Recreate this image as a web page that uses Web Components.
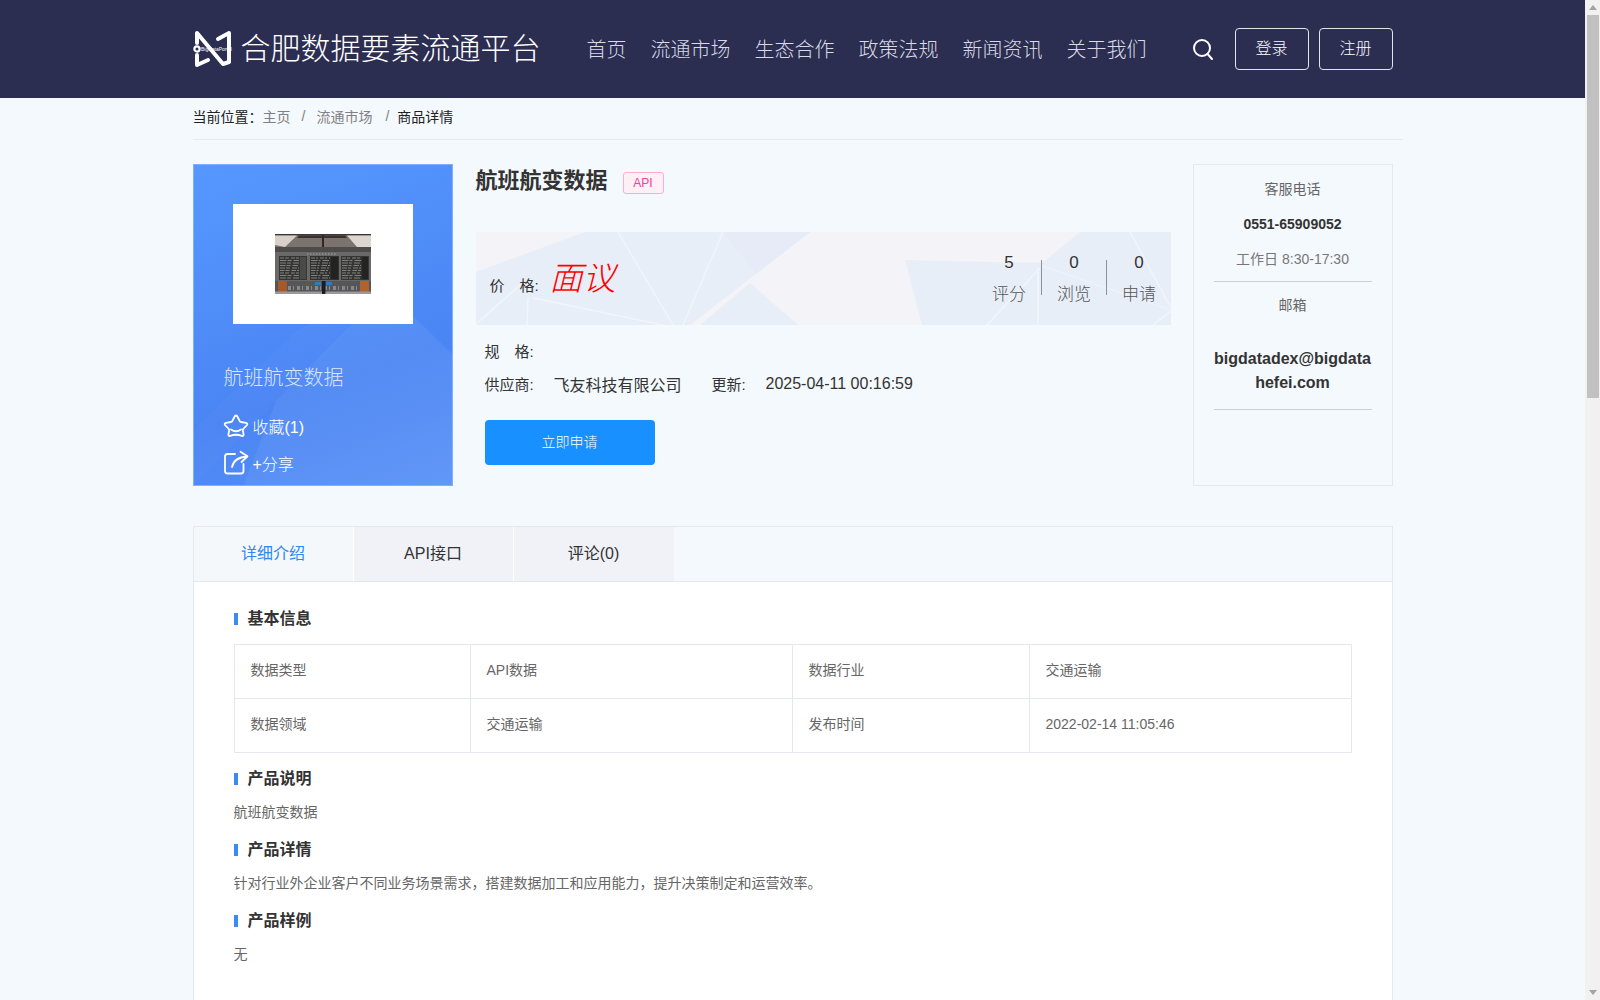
<!DOCTYPE html>
<html lang="zh">
<head>
<meta charset="utf-8">
<title>航班航变数据</title>
<style>
  html, body { margin: 0; height: 100%; overflow: hidden; }
  body {
    display: flex;
    background: #f4f9fd;
    font-family: "Liberation Sans", "Noto Sans CJK SC", sans-serif;
    color: #333;
  }
  main-page { flex: 1; min-width: 0; }
</style>
</head>
<body>
<main-page>
  <site-header></site-header>
  <page-wrap>
    <bread-crumb></bread-crumb>
    <product-summary></product-summary>
    <detail-tabs>
      <section-title>基本信息</section-title>
      <info-table></info-table>
      <section-title>产品说明</section-title>
      <section-text>航班航变数据</section-text>
      <section-title>产品详情</section-title>
      <section-text>针对行业外企业客户不同业务场景需求，搭建数据加工和应用能力，提升决策制定和运营效率。</section-text>
      <section-title>产品样例</section-title>
      <section-text>无</section-text>
    </detail-tabs>
  </page-wrap>
</main-page>
<fake-scrollbar></fake-scrollbar>

<script>
const FONT = '"Liberation Sans", "Noto Sans CJK SC", sans-serif';

class MainPage extends HTMLElement {
  constructor() {
    super();
    this.attachShadow({ mode: 'open' }).innerHTML = `
      <style>
        :host { display: block; height: 1000px; overflow: hidden; }
      </style>
      <slot></slot>`;
  }
}

class SiteHeader extends HTMLElement {
  constructor() {
    super();
    const nav = ['首页', '流通市场', '生态合作', '政策法规', '新闻资讯', '关于我们'];
    this.attachShadow({ mode: 'open' }).innerHTML = `
      <style>
        :host { display: block; height: 98px; background: #2b2d51; }
        .in { width: 1200px; height: 98px; margin: 0 auto; display: flex; align-items: center; }
        .logo { width: 38px; height: 38px; flex: none; margin: 0 9px 0 1px; overflow: visible; }
        h1 { margin: 0; width: 334px; flex: none; font: 300 30px/1 ${FONT}; color: #fff; white-space: nowrap; }
        nav { display: flex; flex: none; padding-bottom: 2px; }
        nav a { padding: 0 12px; font-size: 20px; font-weight: 300; color: #d9dae4; }
        .search { width: 20px; height: 21px; margin-left: 34px; flex: none; }
        .btn { width: 72px; height: 40px; flex: none; line-height: 40px; margin-left: 10px; text-align: center;
               border: 1px solid #e4e5ec; border-radius: 4px; color: #fff; font-size: 16px; font-weight: 300; }
        .search + .btn { margin-left: 22px; }
      </style>
      <div class="in">
        <svg class="logo" viewBox="0 0 38 38" fill="none" stroke="#fff" stroke-width="4" stroke-linejoin="round" stroke-linecap="round">
          <path d="M3 13 V3 L29 34 L35 32 V3 L24 9"/>
          <path d="M3 25 V35 L14 30"/>
          <circle cx="3" cy="19" r="2.6" fill="#2b2d51" stroke-width="2.2"/>
          <text x="7" y="20.5" font-size="5" fill="#fff" stroke="none" font-family="Liberation Sans">BigDataPortal</text>
        </svg>
        <h1>合肥数据要素流通平台</h1>
        <nav>${nav.map(n => `<a>${n}</a>`).join('')}</nav>
        <svg class="search" viewBox="0 0 20 21" fill="none" stroke="#fff" stroke-width="2" stroke-linecap="round">
          <ellipse cx="9" cy="9" rx="8" ry="8"/><path d="M14.6 15 L19 20"/>
        </svg>
        <div class="btn">登录</div>
        <div class="btn">注册</div>
      </div>`;
  }
}

class PageWrap extends HTMLElement {
  constructor() {
    super();
    this.attachShadow({ mode: 'open' }).innerHTML = `
      <style>:host { display: block; width: 1200px; margin: 0 auto; }</style>
      <slot></slot>`;
  }
}

class BreadCrumb extends HTMLElement {
  constructor() {
    super();
    this.attachShadow({ mode: 'open' }).innerHTML = `
      <style>
        :host { display: flex; align-items: center; box-sizing: border-box; width: 1210px; height: 42px; padding-bottom: 5px; border-bottom: 1px solid #e8ecef;
                font-size: 14px; color: #222; white-space: nowrap; }
        .g { color: #808080; }
        .s { color: #808080; margin: 0 11px; }
        .s2 { margin: 0 8px 0 13px; }
      </style>
      <span>当前位置：</span><span class="g">主页</span><span class="s">/</span><span class="g">流通市场</span><span class="s s2">/</span><span>商品详情</span>`;
  }
}

class ProductSummary extends HTMLElement {
  constructor() {
    super();
    this.attachShadow({ mode: 'open' }).innerHTML = `
      <style>
        :host { display: grid; grid-template-columns: 260px 1fr 200px; height: 322px; margin-top: 24px; }
        .mid { padding: 0 0 0 23px; width: 695px; }
        .head { display: flex; align-items: center; height: 32px; padding-top: 1px; }
        .head h2 { margin: 0; font-size: 22px; line-height: 32px; font-weight: 700; color: #333; }
        .tag { margin: 3px 0 0 15px; width: 39px; height: 20px; line-height: 20px; text-align: center; font-size: 12px;
               color: #eb3f9d; background: #fff0f6; border: 1px solid #ffadd2; border-radius: 3px; }
        price-banner { margin-top: 35px; }
        .rows { padding: 0 0 0 9px; font-size: 15px; color: #333; }
        .row { display: flex; align-items: center; height: 33px; }
        .lab { width: 69px; flex: none; white-space: pre; }
        .val { font-size: 16px; }
        .row .up { margin-left: 30px; width: 54px; }
        button { display: block; width: 170px; height: 45px; margin: 20px 0 0 9px; padding: 0 0 4px; border: 0; border-radius: 4px;
                 background: #1890ff; color: #fff; font: 300 14px ${FONT}; }
      </style>
      <product-card></product-card>
      <div class="mid">
        <div class="head"><h2>航班航变数据</h2><span class="tag">API</span></div>
        <price-banner></price-banner>
        <div class="rows" style="margin-top:9px">
          <div class="row"><span class="lab">规　格:</span></div>
          <div class="row"><span class="lab">供应商:</span><span class="val">飞友科技有限公司</span><span class="lab up">更新:</span><span class="val">2025-04-11 00:16:59</span></div>
        </div>
        <button>立即申请</button>
      </div>
      <contact-card></contact-card>`;
  }
}

class ProductCard extends HTMLElement {
  constructor() {
    super();
    // rows of tiny flight-board text for the photo
    let rows = '';
    [[5, 19], [36, 19], [67, 19]].forEach(([x, w]) => {
      for (let y = 24; y < 45; y += 2.5) {
        rows += `<path d="M${x} ${y}h${w}" stroke="#8b8c88" stroke-width=".9" stroke-dasharray="${4 + (y % 3)} 1 ${2 + (x % 3)} 2"/>`;
      }
    });
    this.attachShadow({ mode: 'open' }).innerHTML = `
      <style>
        :host { display: block; position: relative; overflow: hidden; height: 322px; box-sizing: border-box;
                border: 1px solid #7fb0fb; background: linear-gradient(160deg, #5698ff 0%, #4a85f4 65%, #5891f7 100%); color: #fff; }
        .bg { position: absolute; inset: 0; width: 100%; height: 100%; }
        .body { position: relative; padding: 39px 39px 0 30px; }
        .white { width: 180px; height: 120px; margin-left: 9px; background: #fff; display: flex; align-items: center; justify-content: center; }
        .white svg { width: 96px; height: 60px; display: block; }
        h3 { margin: 40px 0 0; font-size: 20px; line-height: 28px; font-weight: 300; color: #d8e6ff; white-space: nowrap; }
        .act { display: flex; align-items: center; height: 37px; font-size: 16px; white-space: nowrap; font-weight: 300; }
        .act svg { width: 26px; height: 24px; margin: 0 4px 0 -1px; flex: none; overflow: visible; }
      </style>
      <svg class="bg" viewBox="0 0 260 322" preserveAspectRatio="none">
        <polygon points="0,266 105,165 193,125 83,237 0,322" fill="#fff" opacity=".025"/>
        <polygon points="83,237 193,125 260,190 260,322 50,322" fill="#fff" opacity=".06"/>
      </svg>
      <div class="body">
        <div class="white">
          <svg viewBox="0 0 96 60" preserveAspectRatio="none">
            <rect width="96" height="60" fill="#5d5c5a"/>
            <rect width="96" height="13" fill="#7d736e"/>
            <rect y="0" width="96" height="1.4" fill="#3b3735"/>
            <polygon points="0,1.5 22,1.5 10,13 0,11" fill="#d9d0ca"/>
            <polygon points="72,1.5 96,1.5 96,13 82,13" fill="#ddd6d0"/>
            <polygon points="24,1.5 70,1.5 72,4 22,4" fill="#35322f"/>
            <rect x="47" y="1" width="2" height="12" fill="#2b2927"/>
            <rect y="13" width="96" height="5" fill="#4d4c4b"/>
            <rect y="18" width="96" height="29" fill="#696967"/>
            <path d="M32 20h30" stroke="#b5b5b2" stroke-width=".8" stroke-dasharray="1.5 1.5"/>
            <rect x="4" y="22" width="28" height="24" fill="#343534"/>
            <rect x="35" y="22" width="29" height="24" fill="#303130"/>
            <rect x="66" y="22" width="28" height="24" fill="#343534"/>
            <rect x="25" y="23" width="6" height="22" fill="#4a4a48"/>
            <rect x="56" y="23" width="7" height="22" fill="#232323"/>
            <rect x="87" y="23" width="6" height="22" fill="#232323"/>
            ${rows}
            <rect y="47" width="96" height="13" fill="#56565a"/>
            <rect x="3" y="47" width="9" height="12" fill="#a8592b"/>
            <rect x="85" y="47" width="9" height="12" fill="#b0622f"/>
            <path d="M13 53h71M13 55h71" stroke="#9a9a98" stroke-width="1.6" stroke-dasharray="3 2 1 3"/>
            <rect x="40" y="48" width="6" height="3" fill="#2f7bbd"/>
            <rect x="51" y="48" width="6" height="3" fill="#2f7bbd"/>
            <rect x="47" y="47" width="3.5" height="13" fill="#1b1b20"/>
            <rect y="57.5" width="47" height="2.5" fill="#9a9a9a"/>
            <rect x="50.5" y="57.5" width="45.5" height="2.5" fill="#9a9a9a"/>
          </svg>
        </div>
        <h3>航班航变数据</h3>
        <div class="act" style="margin-top:15px">
          <svg viewBox="0 0 26 24" fill="none" stroke="#fff" stroke-width="1.8" stroke-linejoin="round" stroke-linecap="round">
            <path d="M13 1.5 Q14 1.5 14.6 3 L16.8 7.2 Q17.2 7.8 18 8 L23 8.8 Q25 9.4 24 11 L20.2 15 Q19.8 15.6 19.9 16.4 L20.6 20.6 Q20.6 22.4 18.8 21.9 Q13 19.6 7.2 21.9 Q5.4 22.4 5.4 20.6 L6.1 16.4 Q6.2 15.6 5.8 15 L2 11 Q1 9.4 3 8.8 L8 8 Q8.8 7.8 9.2 7.2 L11.4 3 Q12 1.5 13 1.5Z"/>
            <path d="M8 15.5 Q13 19 18 15.5"/>
          </svg>
          <span>收藏(1)</span>
        </div>
        <div class="act">
          <svg viewBox="0 0 26 24" fill="none" stroke="#fff" stroke-width="1.8" stroke-linejoin="round" stroke-linecap="round">
            <g transform="translate(1 0)">
              <path d="M11 3 H3.5 Q1 3 1 5.5 V20 Q1 22.5 3.5 22.5 H17 Q19.5 22.5 19.5 20 V13"/>
              <path d="M8 16 Q10 6.5 23 5.5"/>
              <path d="M16.5 0.8 L23.5 5.3 L17.5 11"/>
            </g>
          </svg>
          <span>+分享</span>
        </div>
      </div>`;
  }
}

class PriceBanner extends HTMLElement {
  constructor() {
    super();
    const stats = [['5', '评分'], ['0', '浏览'], ['0', '申请']];
    this.attachShadow({ mode: 'open' }).innerHTML = `
      <style>
        :host { display: flex; position: relative; overflow: hidden; height: 93px; align-items: center;
                background: #f3f3f8; color: #333; }
        .bg { position: absolute; inset: 0; width: 100%; height: 100%; }
        .lab { position: relative; font-size: 15px; margin: 12px 0 0 14px; width: 60px; white-space: pre; }
        .price { position: relative; font-size: 33px; font-style: italic; color: #f00; font-weight: 300; margin: -5px 0 0 0; }
        .stats { position: relative; margin-left: auto; display: flex; }
        .st { width: 65px; text-align: center; position: relative; height: 93px; box-sizing: border-box; padding: 21px 0 0 2px; }
        .st b { display: block; font-weight: 400; font-size: 17px; line-height: 20px; color: #333; }
        .st span { display: block; font-size: 17px; line-height: 22px; margin-top: 11px; color: #555; font-weight: 300; }
        .st + .st::before { content: ""; position: absolute; left: 0; top: 28px; height: 35px; width: 1px; background: #8d9097; }
      </style>
      <svg class="bg" viewBox="0 0 695 93" preserveAspectRatio="none" fill="none">
        <polygon points="0,40 109,0 334,0 214,93 0,93" fill="#e8eef7"/>
        <polygon points="247,0 334,0 280,42" fill="#e6ebf7"/>
        <polygon points="274,51 322,93 224,93" fill="#e8eef7"/>
        <polygon points="429,28 566,31 604,0 695,0 695,93 446,93" fill="#e8eef8"/>
        <g stroke="#f1f4fa" stroke-width="1.6">
          <path d="M142 0 L197 93"/>
          <path d="M247 0 L207 93"/>
          <path d="M57 66 L187 93"/>
          <path d="M-1 93 L44 53"/>
          <path d="M52 66 L51 93"/>
          <path d="M654 0 L695 76"/>
          <path d="M511 93 L564 36"/>
          <path d="M562 36 V93"/>
          <path d="M677 93 L695 79"/>
        </g>
        <path d="M566 34 L695 78" stroke="#eff3fa" stroke-width="1"/>
      </svg>
      <span class="lab">价　格:</span>
      <span class="price">面议</span>
      <div class="stats">
        ${stats.map(s => `<div class="st"><b>${s[0]}</b><span>${s[1]}</span></div>`).join('')}
      </div>`;
  }
}

class ContactCard extends HTMLElement {
  constructor() {
    super();
    this.attachShadow({ mode: 'open' }).innerHTML = `
      <style>
        :host { display: block; box-sizing: border-box; height: 322px; border: 1px solid #e6e9ec; padding: 0 20px; text-align: center;
                font-size: 14px; color: #666; }
        p { margin: 0; }
        .t { padding-top: 14px; line-height: 20px; }
        .ph { margin-top: 15px; line-height: 20px; font-weight: 700; color: #333; }
        .wk { margin-top: 15px; line-height: 20px; color: #777; padding-bottom: 12px; border-bottom: 1px solid #ccd0d4; }
        .ml { margin-top: 13px; line-height: 20px; }
        .em { margin-top: 32px; font-size: 16px; line-height: 24px; font-weight: 700; color: #333; word-break: break-all; padding-bottom: 14px; border-bottom: 1px solid #ccd0d4; }
      </style>
      <p class="t">客服电话</p>
      <p class="ph">0551-65909052</p>
      <p class="wk">工作日 8:30-17:30</p>
      <p class="ml">邮箱</p>
      <p class="em">bigdatadex@bigdatahefei.com</p>`;
  }
}

class DetailTabs extends HTMLElement {
  constructor() {
    super();
    this.attachShadow({ mode: 'open' }).innerHTML = `
      <style>
        :host { display: block; margin-top: 40px; box-sizing: border-box; border: 1px solid #e4e7ec; border-bottom: 0; }
        .bar { display: flex; height: 55px; border-bottom: 1px solid #e4e7ec; box-sizing: border-box; }
        .tab { width: 160px; text-align: center; line-height: 53px; font-size: 16px; color: #333; background: #f0f2f7; border-left: 1px solid #fff; box-sizing: border-box; }
        .tab.on { background: #f4f8fb; color: #2f88f0; border-left: 0; width: 159px; }
        .tab:last-child { width: 161px; }
        .pane { background: #fff; padding: 23px 40px 0; height: 500px; }
      </style>
      <div class="bar">
        <div class="tab on">详细介绍</div>
        <div class="tab">API接口</div>
        <div class="tab">评论(0)</div>
      </div>
      <div class="pane"><slot></slot></div>`;
  }
}

class SectionTitle extends HTMLElement {
  constructor() {
    super();
    this.attachShadow({ mode: 'open' }).innerHTML = `
      <style>
        :host { display: flex; align-items: center; height: 24px; font-size: 16px; font-weight: 700; color: #333; }
        i { width: 4px; height: 12px; background: #3a8cf2; margin: 3px 10px 0 0; flex: none; }
      </style>
      <i></i><slot></slot>`;
  }
}

class SectionText extends HTMLElement {
  constructor() {
    super();
    this.attachShadow({ mode: 'open' }).innerHTML = `
      <style>
        :host { display: block; height: 24px; line-height: 24px; margin: 11px 0 12px; font-size: 14px; color: #666; }
      </style>
      <slot></slot>`;
  }
}

class InfoTable extends HTMLElement {
  constructor() {
    super();
    const cells = ['数据类型', 'API数据', '数据行业', '交通运输', '数据领域', '交通运输', '发布时间', '2022-02-14 11:05:46'];
    this.attachShadow({ mode: 'open' }).innerHTML = `
      <style>
        :host { display: grid; grid-template-columns: 236px 322px 237px 322px; margin: 15px 0 12px; box-sizing: border-box;
                border-top: 1px solid #e4e7ec; border-left: 1px solid #e4e7ec; font-size: 14px; color: #666; width: 1118px; }
        div { height: 54px; line-height: 51px; box-sizing: border-box; padding-left: 16px; border-right: 1px solid #e4e7ec; border-bottom: 1px solid #e4e7ec; }
      </style>
      ${cells.map(c => `<div>${c}</div>`).join('')}`;
  }
}

class FakeScrollbar extends HTMLElement {
  constructor() {
    super();
    this.attachShadow({ mode: 'open' }).innerHTML = `
      <style>
        :host { display: flex; flex-direction: column; flex: none; width: 15px; height: 1000px; background: #f1f1f1; }
        .up, .down { height: 15px; display: flex; align-items: center; justify-content: center; }
        .up::after { content: ""; border: 4px solid transparent; border-top: 0; border-bottom: 5px solid #a3a3a3; }
        .down { margin-top: auto; }
        .down::after { content: ""; border: 4px solid transparent; border-bottom: 0; border-top: 5px solid #a3a3a3; }
        .thumb { height: 383px; margin: 0 1px 0 2px; background: #c1c1c1; }
      </style>
      <div class="up"></div><div class="thumb"></div><div class="down"></div>`;
  }
}

customElements.define('main-page', MainPage);
customElements.define('site-header', SiteHeader);
customElements.define('page-wrap', PageWrap);
customElements.define('bread-crumb', BreadCrumb);
customElements.define('product-summary', ProductSummary);
customElements.define('product-card', ProductCard);
customElements.define('price-banner', PriceBanner);
customElements.define('contact-card', ContactCard);
customElements.define('detail-tabs', DetailTabs);
customElements.define('section-title', SectionTitle);
customElements.define('section-text', SectionText);
customElements.define('info-table', InfoTable);
customElements.define('fake-scrollbar', FakeScrollbar);
</script>
</body>
</html>
